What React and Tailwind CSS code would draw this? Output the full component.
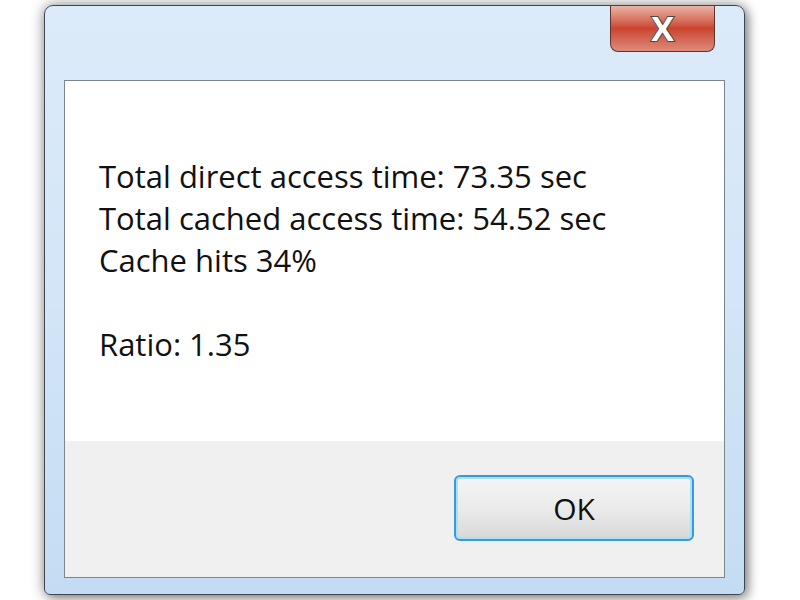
export default function App() {
    const font = { fontFamily: '"Open Sans", "Noto Sans", sans-serif' };

    return (
        <div className="w-[800px] h-[600px] bg-white overflow-hidden pl-[44px] pt-[5px]">
            <div className="w-[701px] h-[590px] rounded-t-[9px] rounded-b-[6px] border border-[#3e4750] bg-gradient-to-b from-[#dcebfa] via-[#d3e5f7] to-[#c4dcf3] shadow-[0_0_14px_rgba(0,0,0,0.45),4px_4px_10px_rgba(0,0,0,0.25)] flex flex-col">
                {/* title bar */}
                <div className="h-[74px] flex justify-end pr-[29px] shrink-0">
                    <button className="w-[105px] h-[46px] rounded-b-[8px] border border-t-0 border-[#5f3430] bg-gradient-to-b from-[#eab4a8] via-[#c9432f] to-[#dc8b7c] flex items-center justify-center">
                        <span
                            className="text-[34px] font-bold text-white leading-none -mt-[2px]"
                            style={{ ...font, WebkitTextStroke: "2px #4a4a4a", paintOrder: "stroke fill" }}
                        >
                            X
                        </span>
                    </button>
                </div>

                {/* client area */}
                <div className="flex-1 mx-[19px] mb-[16px] border border-[#7d858d] flex flex-col">
                    <div className="h-[360px] bg-white pl-[34px] pt-[74px] text-[31px] leading-[42px] text-[#111]" style={font}>
                        <div>Total direct access time: 73.35 sec</div>
                        <div>Total cached access time: 54.52 sec</div>
                        <div>Cache hits 34%</div>
                        <div className="h-[42px]"></div>
                        <div>Ratio: 1.35</div>
                    </div>
                    <div className="flex-1 bg-[#f0f0f0] flex justify-end items-start pt-[34px] pr-[30px]">
                        <button
                            className="w-[240px] h-[66px] rounded-[6px] border-2 border-[#3a9ad6] shadow-[inset_0_0_0_2px_#a8e0f8] bg-gradient-to-b from-[#f4f4f4] via-[#ebebeb] to-[#d8d8d8] text-[30px] text-[#111]"
                            style={font}
                        >
                            OK
                        </button>
                    </div>
                </div>
            </div>
        </div>
    );
}
